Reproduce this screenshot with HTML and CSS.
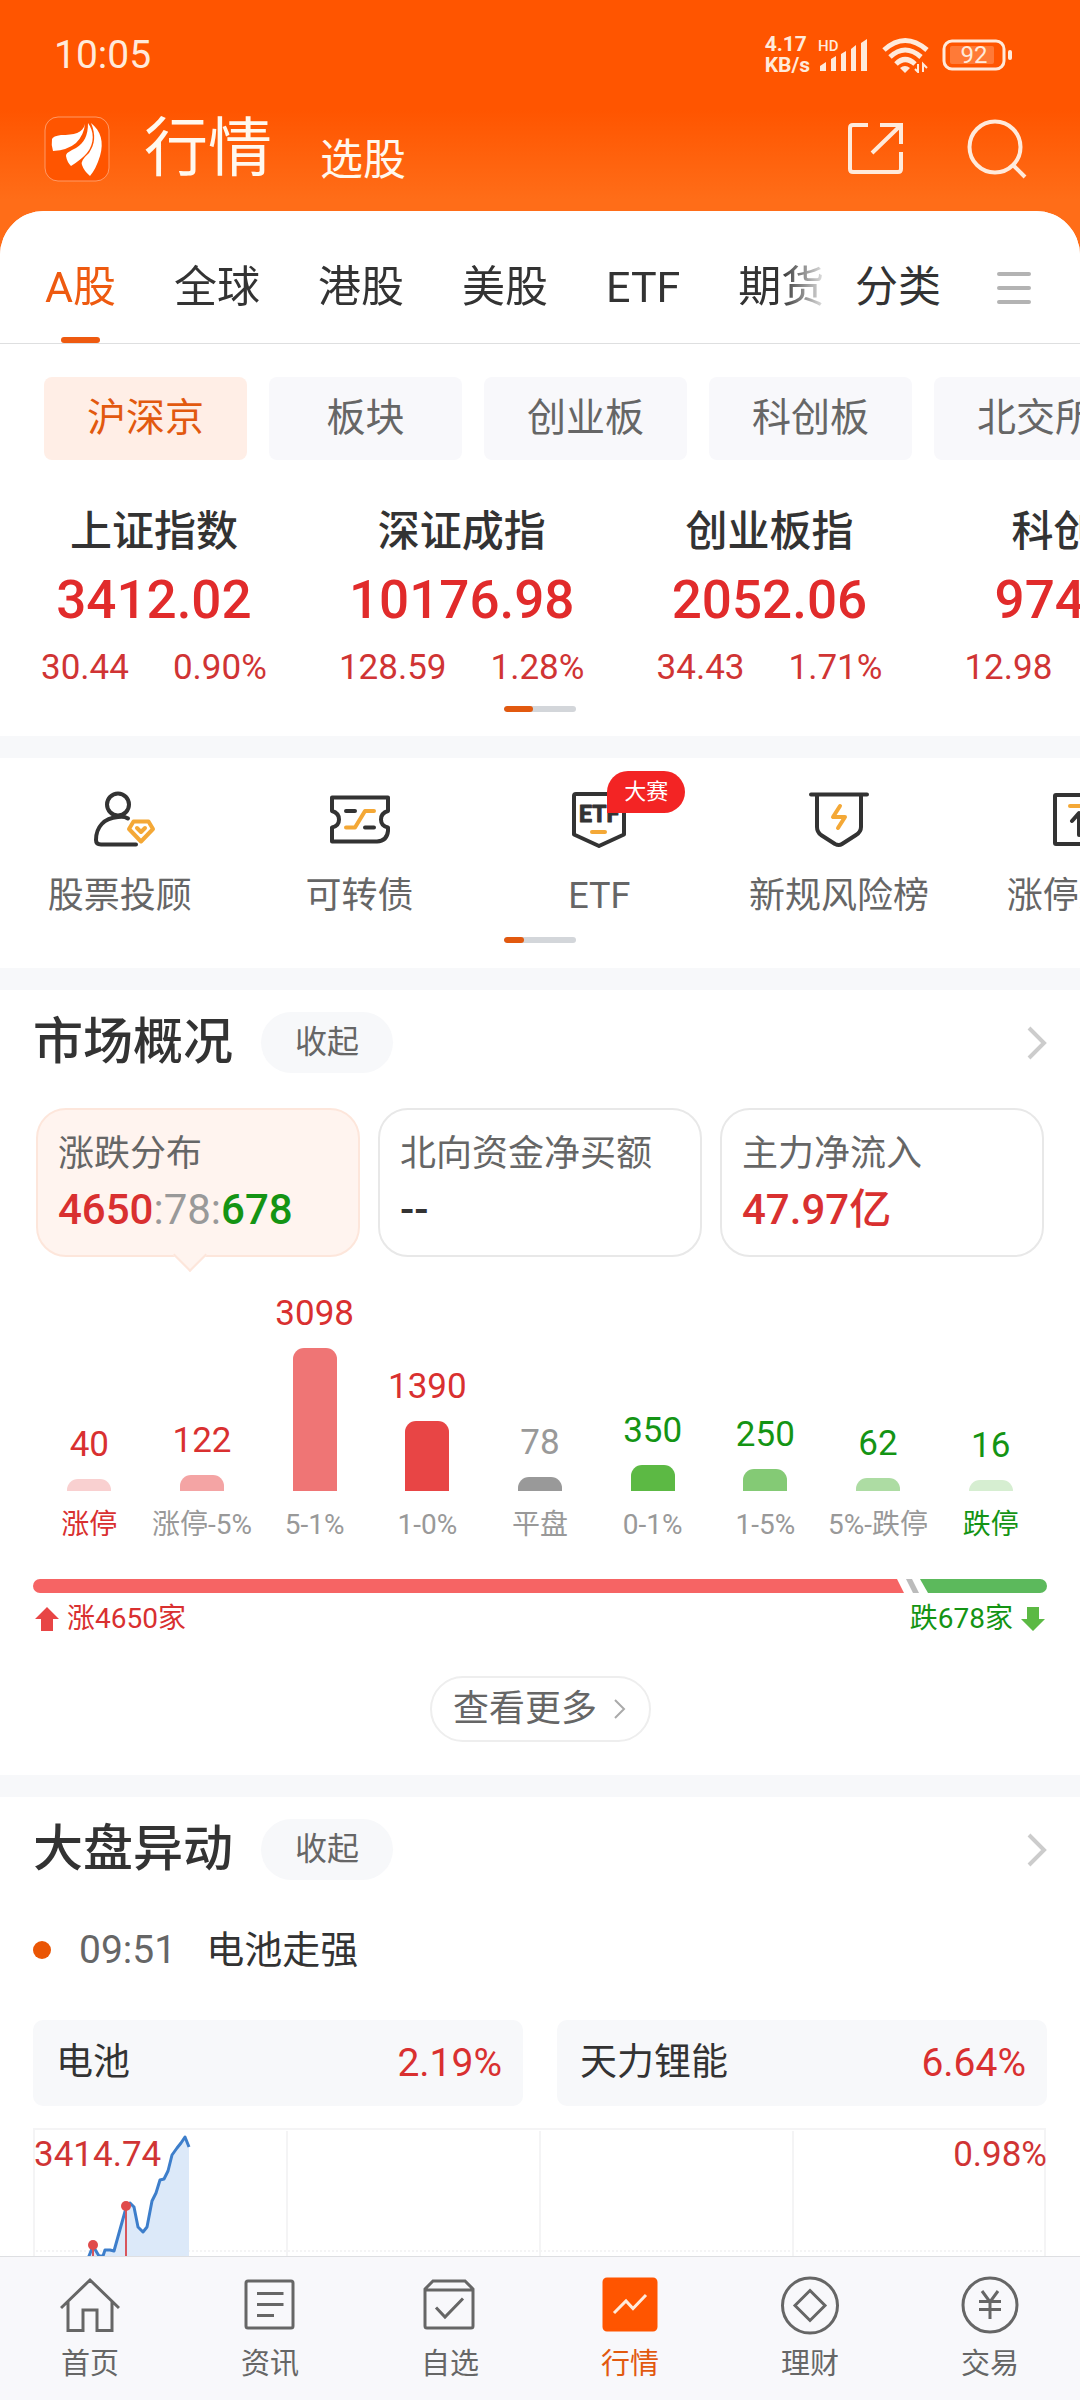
FILE: index.html
```
<!DOCTYPE html>
<html lang="zh-CN">
<head>
    <meta charset="UTF-8">
    <meta name="viewport" content="width=device-width, initial-scale=1.0">
    <title>行情</title>
    <link rel="stylesheet" href="styles.css">
</head>
<body>
    <div class="page">

        <!-- status bar -->
        <div class="status">
            <span class="clock">10:05</span>
            <div class="status_right">
                <span class="speed">4.17<br>KB/s</span>
                <svg class="signal" width="54" height="36" viewBox="0 0 54 36">
                    <text x="2" y="14" class="hd">HD</text>
                    <path d="M4 34v-5l6-4v9zM15 34V22l5-3v15zM25 34V17l5-3v20zM35 34V12l5-4v26zM45 34V6l6-4v32z"/>
                </svg>
                <svg class="wifi" width="48" height="36" viewBox="0 0 48 36">
                    <path d="M2 13Q23-6 45 13M8 20Q23 6 39 20M14 27Q23 18 33 27" fill="none" stroke-width="5"/>
                    <path d="M18 31q5-4 10 0l-5 5z"/>
                    <path d="M36 27v8l-3-3M41 35v-8l4 4" fill="none" stroke-width="2"/>
                </svg>
                <svg class="battery" width="71" height="32" viewBox="0 0 71 32">
                    <rect x="2" y="2" width="60" height="28" rx="8" fill="none" stroke-width="3"/>
                    <rect x="8" y="7" width="44" height="18" rx="2" opacity=".25"/>
                    <rect x="66" y="11" width="4" height="10" rx="2"/>
                    <text x="32" y="24" text-anchor="middle">92</text>
                </svg>
            </div>
        </div>

        <!-- title bar -->
        <header class="topbar">
            <a href="#" class="logo" aria-label="首页">
                <svg width="66" height="66" viewBox="0 0 66 66">
                    <rect x="1" y="1" width="64" height="64" rx="13" fill="#ff5500" stroke="#ff9a66"/>
                    <path d="M41 8C39 17 30 19 17 19Q9 20 8 23Q7 29 9 35Q24 34 32 27Q40 19 41 8Z"/>
                    <path d="M44 7C44 20 40 27 32 32Q21 37 22 40Q23 46 27 50Q38 43 43 37C51 27 50 15 44 7Z"/>
                    <path d="M47 7C52 19 51 28 45 37Q36 45 38 49Q40 55 46 60Q52 53 56 40C60 26 57 15 47 7Z"/>
                </svg>
            </a>
            <div class="titles">
                <h1>行情</h1>
                <a href="#">选股</a>
            </div>
            <button class="icon_btn" aria-label="分享">
                <svg width="56" height="56" viewBox="0 0 56 56">
                    <path d="M20 4H5Q2 4 2 7V48Q2 51 5 51H50Q53 51 53 48V31M32 4H53V23M53 4L24 32"/>
                </svg>
            </button>
            <button class="icon_btn" aria-label="搜索">
                <svg width="60" height="60" viewBox="0 0 60 60">
                    <circle cx="28" cy="28" r="25.500"/>
                    <path d="M46 46L58 58"/>
                </svg>
            </button>
        </header>

        <main class="sheet">
            <nav class="tabs">
                <div class="tab_list">
                    <button class="tab on">A股</button>
                    <button class="tab">全球</button>
                    <button class="tab">港股</button>
                    <button class="tab">美股</button>
                    <button class="tab">ETF</button>
                    <button class="tab">期货</button>
                </div>
                <button class="tab">分类</button>
                <button class="tab_menu" aria-label="菜单">
                    <svg width="34" height="34" viewBox="0 0 34 34"><path d="M2 3H32M2 17H32M2 31H32"/></svg>
                </button>
            </nav>

            <!-- index quotes -->
            <section class="block quotes">
                <div class="chips">
                    <button class="chip on">沪深京</button>
                    <button class="chip">板块</button>
                    <button class="chip">创业板</button>
                    <button class="chip">科创板</button>
                    <button class="chip">北交所</button>
                </div>
                <div class="index_list">
                    <div class="index"><h3>上证指数</h3><strong>3412.02</strong><p><span>30.44</span><span>0.90%</span></p></div>
                    <div class="index"><h3>深证成指</h3><strong>10176.98</strong><p><span>128.59</span><span>1.28%</span></p></div>
                    <div class="index"><h3>创业板指</h3><strong>2052.06</strong><p><span>34.43</span><span>1.71%</span></p></div>
                    <div class="index"><h3>科创50</h3><strong>974.65</strong><p><span>12.98</span><span>1.35%</span></p></div>
                </div>
                <div class="pager"><span style="width: 40%"></span></div>
            </section>

            <!-- tools -->
            <section class="block tools">
                <div class="tool_list">
                    <a href="#" class="tool">
                        <svg width="72" height="60" viewBox="0 0 72 60">
                            <circle cx="34" cy="14.500" r="11"/>
                            <path d="M44 28.500C41 26.500 37 26.500 34 27C20 28 12 37 12 50Q12 54.500 17 54.500H52"/>
                            <path class="gold" d="M49.500 31.500H64.500L69 39 57 51.500 45 39Z"/>
                            <path class="gold" d="M53 38L57 42L61 38"/>
                        </svg>
                        股票投顾
                    </a>
                    <a href="#" class="tool">
                        <svg width="72" height="60" viewBox="0 0 72 60">
                            <path d="M8 7.500H64V21Q57 23 57 29.500T64 37.500V41Q63 51 53 51.500H8V37.500Q15 36 15 29.500T8 21Z"/>
                            <path d="M22 21H31M41 37.500H50"/>
                            <path class="gold" d="M22 37.500H31L41 21H50"/>
                        </svg>
                        可转债
                    </a>
                    <a href="#" class="tool">
                        <span class="tool_icon">
                            <svg width="72" height="60" viewBox="0 0 72 60">
                                <path d="M11 6Q11 4 13 4H59Q61 4 61 6V44.500L36 56 11 44.500Z"/>
                                <text x="16" y="32">ETF</text>
                                <path class="gold" d="M29 42H42"/>
                            </svg>
                            <span class="badge">大赛</span>
                        </span>
                        ETF
                    </a>
                    <a href="#" class="tool">
                        <svg width="72" height="60" viewBox="0 0 72 60">
                            <path d="M8 4.500H64M14 5V37Q14 42 18 45L32 54Q36 56 39 54L53 45Q58 42 58 37V5"/>
                            <path class="gold" d="M37 16L30 27H42L35 38"/>
                        </svg>
                        新规风险榜
                    </a>
                    <a href="#" class="tool">
                        <svg width="72" height="60" viewBox="0 0 72 60">
                            <rect x="12" y="5" width="48" height="49" rx="1"/>
                            <path class="gold" d="M27 16H45"/>
                            <path d="M36 45V26M29 31L36 23L43 31"/>
                        </svg>
                        涨停聚焦
                    </a>
                </div>
                <div class="pager"><span style="width: 28%"></span></div>
            </section>

            <!-- market overview -->
            <section class="block market">
                <div class="head">
                    <h2>市场概况</h2>
                    <button class="fold">收起</button>
                    <a href="#" class="more_arrow" aria-label="更多"><svg width="20" height="34" viewBox="0 0 20 34"><path d="M2 2L17 17L2 32"/></svg></a>
                </div>
                <div class="cards">
                    <button class="card on">
                        <span class="card_name">涨跌分布</span>
                        <span class="card_num"><b class="red">4650</b><span class="gray">:78:</span><b class="green">678</b></span>
                    </button>
                    <button class="card">
                        <span class="card_name">北向资金净买额</span>
                        <span class="card_num"><b>--</b></span>
                    </button>
                    <button class="card">
                        <span class="card_name">主力净流入</span>
                        <span class="card_num"><b class="red">47.97亿</b></span>
                    </button>
                </div>
                <div class="bars">
                    <div class="col red"><b>40</b><i class="r1" style="height: 12px"></i><span>涨停</span></div>
                    <div class="col red"><b>122</b><i class="r2" style="height: 16px"></i><span class="gray">涨停-5%</span></div>
                    <div class="col red"><b>3098</b><i class="r3" style="height: 143px"></i><span class="gray">5-1%</span></div>
                    <div class="col red"><b>1390</b><i class="r4" style="height: 70px"></i><span class="gray">1-0%</span></div>
                    <div class="col gray"><b>78</b><i class="flat" style="height: 14px"></i><span>平盘</span></div>
                    <div class="col green"><b>350</b><i class="g4" style="height: 26px"></i><span class="gray">0-1%</span></div>
                    <div class="col green"><b>250</b><i class="g3" style="height: 22px"></i><span class="gray">1-5%</span></div>
                    <div class="col green"><b>62</b><i class="g2" style="height: 13px"></i><span class="gray">5%-跌停</span></div>
                    <div class="col green"><b>16</b><i class="g1" style="height: 11px"></i><span>跌停</span></div>
                </div>
                <div class="ratio">
                    <span class="ratio_up" style="flex-grow: 4650"></span>
                    <span class="ratio_cut"></span>
                    <span class="ratio_down" style="flex-grow: 678"></span>
                </div>
                <div class="ratio_text">
                    <span class="red"><svg width="24" height="24" viewBox="0 0 24 24"><path fill="#e84545" d="M12 0L24 12H18V24H6V12H0Z"/></svg>涨4650家</span>
                    <span class="green">跌678家<svg width="24" height="24" viewBox="0 0 24 24"><path fill="#5cb944" d="M12 24L0 12H6V0H18V12H24Z"/></svg></span>
                </div>
                <a href="#" class="see_more">查看更多<svg width="14" height="22" viewBox="0 0 14 22"><path d="M2 2L11 11L2 20"/></svg></a>
            </section>

            <!-- market moves -->
            <section class="block moves">
                <div class="head">
                    <h2>大盘异动</h2>
                    <button class="fold">收起</button>
                    <a href="#" class="more_arrow" aria-label="更多"><svg width="20" height="34" viewBox="0 0 20 34"><path d="M2 2L17 17L2 32"/></svg></a>
                </div>
                <div class="event"><i></i><time>09:51</time><span>电池走强</span></div>
                <div class="stocks">
                    <a href="#"><span>电池</span><b>2.19%</b></a>
                    <a href="#"><span>天力锂能</span><b>6.64%</b></a>
                </div>
                <div class="trend">
                    <svg viewBox="0 0 1014 300">
                        <path class="grid" d="M1 300V1H1012V300M254 3V300M507 3V300M760 3V300"/>
                        <path class="grid dots" d="M3 123H1011"/>
                        <path class="area" d="M50 145L56 128 60 118 66 128 70 128 72 122 77 122 81 123 93 80 97 75 101 79 105 99 110 104 114 99 119 73 123 65 127 52 131 51 135 43 139 27 144 20 148 15 152 9 156 19V300H50Z"/>
                        <path class="line" d="M50 145L56 128 60 118 66 128 70 128 72 122 77 122 81 123 93 80 97 75 101 79 105 99 110 104 114 99 119 73 123 65 127 52 131 51 135 43 139 27 144 20 148 15 152 9 156 19"/>
                        <path class="mark" d="M60 118V300M93 78V300"/>
                        <circle cx="60" cy="117" r="5"/>
                        <circle cx="93" cy="78" r="5"/>
                    </svg>
                    <div class="trend_text"><span>3414.74</span><span>0.98%</span></div>
                </div>
            </section>
        </main>

        <!-- bottom menu -->
        <nav class="menu">
            <a href="#">
                <svg width="60" height="60" viewBox="0 0 60 60"><path d="M1 32L30 4L59 32M8 26V54.500H23V34H37V54.500H52V26"/></svg>
                首页
            </a>
            <a href="#">
                <svg width="60" height="60" viewBox="0 0 60 60"><rect x="6" y="5" width="47" height="47" rx="2"/><path d="M17 17.500H43.500M17 28.500H43.500M17 39.500H34"/></svg>
                资讯
            </a>
            <a href="#">
                <svg width="60" height="60" viewBox="0 0 60 60"><path d="M5 13L13 5H45L53 13V50Q53 52 51 52H7Q5 52 5 50ZM5 14H53M16 31.500L25 41L43 22.500"/></svg>
                自选
            </a>
            <a href="#" class="on">
                <svg width="60" height="60" viewBox="0 0 60 60"><rect x="4" y="3" width="52" height="51" rx="3" fill="#ff5500" stroke="#ff5500"/><path d="M14 37L26 25L33 32.500L46 19" stroke="#ffeadb"/></svg>
                行情
            </a>
            <a href="#">
                <svg width="60" height="60" viewBox="0 0 60 60"><circle cx="30" cy="29.500" r="27.500"/><path d="M30 14.500L45 29.500L30 44.500L15 29.500Z"/></svg>
                理财
            </a>
            <a href="#">
                <svg width="60" height="60" viewBox="0 0 60 60"><circle cx="30" cy="29" r="27"/><path d="M22 15L30 26L38 15M30 26V43M19 25.500H41M19 33.500H41"/></svg>
                交易
            </a>
        </nav>
    </div>
</body>
</html>
```
FILE: styles.css
```
* {
    box-sizing: border-box;
    margin: 0;
    padding: 0;
}

body {
    font-family: Roboto, "Noto Sans CJK SC", sans-serif;
    color: #333;
}

a {
    color: inherit;
    text-decoration: none;
}

button {
    font: inherit;
    color: inherit;
    background: none;
    border: 0;
    cursor: pointer;
}

svg {
    display: block;
    flex: none;
}

h1, h2, h3, b, strong {
    font-weight: 500;
}

.page {
    height: 100vh;
    display: flex;
    flex-direction: column;
    background: linear-gradient(#ff5500 110px, #ff6d18 200px);
}

/* status bar */
.status {
    flex: none;
    display: flex;
    justify-content: space-between;
    align-items: center;
    height: 110px;
    padding: 0 67px 0 54px;
    color: #ffeadb;
}

.clock {
    font-size: 39px;
}

.status_right {
    display: flex;
    align-items: center;
}

.status_right svg {
    fill: #ffeadb;
    stroke: none;
}

.speed {
    font-size: 21px;
    line-height: 21px;
    font-weight: 700;
    margin-right: 6px;
}

.hd {
    font-size: 15px;
    font-weight: 500;
}

.wifi, .battery {
    margin-left: 12px;
}

.wifi path, .battery rect {
    stroke: #ffeadb;
    stroke-width: 0;
}

.wifi path[stroke-width="5"] {
    stroke-width: 5px;
}

.wifi path[stroke-width="2"] {
    stroke-width: 2px;
}

.battery rect[stroke-width] {
    stroke-width: 3px;
}

.battery text {
    font-size: 24px;
}

/* title bar */
.topbar {
    flex: none;
    display: flex;
    align-items: center;
    padding: 6px 53px 29px 44px;
    color: #fff8ee;
}

.logo path {
    fill: #fff;
}

.titles {
    flex: 1;
    display: flex;
    align-items: flex-end;
    gap: 48px;
    margin-left: 34px;
    font-size: 43px;
    line-height: 44px;
}

.titles h1 {
    font-size: 64px;
    line-height: 66px;
    font-weight: 400;
}

.icon_btn {
    margin-left: 63px;
}

.icon_btn svg {
    fill: none;
    stroke: #ffeadb;
    stroke-width: 4px;
}

/* white sheet */
.sheet {
    flex: 1;
    min-height: 0;
    overflow: hidden;
    background: #f7f8fa;
    border-radius: 44px 44px 0 0;
}

.tabs {
    display: flex;
    align-items: flex-start;
    background: #fff;
    padding: 43px 49px 0 45px;
    border-bottom: 1px solid #dedfe0;
}

.tab_list {
    flex: 1;
    min-width: 0;
    display: flex;
    gap: 58px;
    overflow: hidden;
    margin-right: 24px;
    -webkit-mask-image: linear-gradient(to left, transparent, #000 50px);
    mask-image: linear-gradient(to left, transparent, #000 50px);
}

.tab {
    flex: none;
    font-size: 43px;
    line-height: 66px;
    padding-bottom: 23px;
    white-space: nowrap;
}

.tab.on {
    color: #ee5a10;
    padding-bottom: 0;
}

.tab.on::after {
    content: "";
    display: block;
    width: 39px;
    height: 6px;
    margin: 17px auto 0;
    border-radius: 3px;
    background: #ee5a10;
}

.tab_menu {
    margin: 17px 0 0 56px;
}

.tab_menu path {
    stroke: #b3b3b3;
    stroke-width: 4px;
    stroke-linecap: round;
}

.block {
    background: #fff;
    margin-bottom: 22px;
    overflow: hidden;
}

.chips {
    display: flex;
    gap: 22px;
    padding: 33px 0 0 44px;
}

.chip {
    flex: none;
    min-width: 193px;
    padding: 0 43px;
    font-size: 39px;
    line-height: 83px;
    color: #666;
    background: #f8f8fb;
    border-radius: 8px;
}

.chip.on {
    color: #e2590f;
    background: #ffeee6;
}

.index_list {
    display: grid;
    grid-auto-flow: column;
    grid-auto-columns: 28.5%;
    margin: 47px 0 16px;
}

.index {
    text-align: center;
    color: #e12b2b;
}

.index h3 {
    font-size: 42px;
    line-height: 50px;
    color: #333;
}

.index strong {
    display: block;
    font-size: 53px;
    line-height: 60px;
    margin: 13px 0 16px;
}

.index p {
    display: flex;
    justify-content: center;
    gap: 44px;
    font-size: 35px;
    line-height: 44px;
    color: #d03434;
}

.pager {
    width: 72px;
    height: 6px;
    margin: 0 auto;
    border-radius: 3px;
    background: #d3d6da;
    overflow: hidden;
}

.pager span {
    display: block;
    height: 6px;
    border-radius: 3px;
    background: #e2590f;
}

.quotes {
    padding-bottom: 24px;
}

/* tools */
.tools {
    padding: 32px 0 25px;
}

.tool_list {
    display: grid;
    grid-auto-flow: column;
    grid-auto-columns: 22.2%;
    margin-bottom: 19px;
}

.tool {
    display: flex;
    flex-direction: column;
    align-items: center;
    gap: 24px;
    font-size: 36px;
    line-height: 44px;
    color: #666;
    white-space: nowrap;
}

.tool svg {
    fill: none;
    stroke: #333;
    stroke-width: 4px;
    stroke-linecap: round;
    stroke-linejoin: round;
}

.tool svg .gold {
    stroke: #f4a836;
}

.tool svg text {
    font-size: 23px;
    font-weight: 700;
    fill: #333;
    stroke-width: 1px;
}

.tool_icon {
    position: relative;
}

.badge {
    position: absolute;
    left: 44px;
    top: -19px;
    width: 78px;
    font-size: 22px;
    line-height: 42px;
    text-align: center;
    color: #fff;
    background: #f32424;
    border-radius: 21px 21px 21px 0;
}

/* sections with a heading */
.market, .moves {
    padding: 22px 33px 0;
}

.head {
    display: flex;
    align-items: center;
}

.head h2 {
    font-size: 50px;
    line-height: 61px;
}

.fold {
    width: 132px;
    margin-left: 28px;
    font-size: 32px;
    line-height: 61px;
    color: #666;
    background: #f7f8fa;
    border-radius: 31px;
}

.more_arrow {
    margin-left: auto;
}

.more_arrow path, .see_more path {
    fill: none;
    stroke: #ccc;
    stroke-width: 4px;
}

.cards {
    display: grid;
    grid-template-columns: repeat(3, 1fr);
    gap: 18px;
    margin: 35px 3px 37px;
}

.card {
    position: relative;
    padding: 16px 20px 17px;
    text-align: left;
    line-height: 56px;
    border: 2px solid #e8e8e8;
    border-radius: 30px;
}

.card.on {
    background: #fff4ef;
    border-color: #fde6db;
}

.card.on::after {
    content: "";
    position: absolute;
    left: calc(50% - 20px);
    bottom: -12px;
    width: 22px;
    height: 22px;
    background: #fff4ef;
    border: solid #fde6db;
    border-width: 0 2px 2px 0;
    transform: rotate(45deg);
}

.card_name {
    display: block;
    font-size: 36px;
    color: #666;
}

.card_num {
    display: block;
    font-size: 42px;
}

.red {
    color: #d93030;
}

.green {
    color: #149414;
}

.gray {
    color: #999;
}

.bars {
    display: grid;
    grid-template-columns: repeat(9, 1fr);
    align-items: end;
}

.col {
    display: flex;
    flex-direction: column;
    align-items: center;
}

.col b {
    font-size: 35px;
    line-height: 40px;
    font-weight: 400;
}

.col i {
    width: 44px;
    margin: 14px 0 16px;
    border-radius: 11px 11px 0 0;
}

.col span {
    font-size: 28px;
    line-height: 36px;
    white-space: nowrap;
}

.r1 { background: #f9d0d0; }
.r2 { background: #f4a4a4; }
.r3 { background: #ef7575; }
.r4 { background: #e84545; }
.flat { background: #999; }
.g4 { background: #5cb944; }
.g3 { background: #84ca75; }
.g2 { background: #addca3; }
.g1 { background: #d6eed1; }

.ratio {
    display: flex;
    height: 14px;
    margin: 36px 0 8px;
    border-radius: 7px;
    overflow: hidden;
}

.ratio_up {
    background: #f66464;
    clip-path: polygon(0 0, calc(100% - 7px) 0, 100% 100%, 0 100%);
}

.ratio_cut {
    width: 14px;
    margin: 0 1px;
    background: #bbb;
    clip-path: polygon(1px 0, 7px 0, 100% 100%, 8px 100%);
}

.ratio_down {
    background: #5cb95c;
    clip-path: polygon(0 0, 100% 0, 100% 100%, 8px 100%);
}

.ratio_text {
    display: flex;
    justify-content: space-between;
    font-size: 28px;
    line-height: 36px;
    padding: 0 2px;
}

.ratio_text span {
    display: flex;
    align-items: center;
    gap: 8px;
}

.see_more {
    display: flex;
    justify-content: center;
    align-items: center;
    gap: 16px;
    width: 221px;
    margin: 39px auto 33px;
    font-size: 36px;
    line-height: 62px;
    color: #666;
    border: 2px solid #eee;
    border-radius: 33px;
}

.see_more path {
    stroke: #aaa;
    stroke-width: 2px;
}

/* market moves */
.event {
    display: flex;
    align-items: center;
    margin: 45px 0;
    font-size: 38px;
    line-height: 50px;
}

.event i {
    width: 18px;
    height: 18px;
    border-radius: 50%;
    background: #ea5504;
}

.event time {
    margin: 0 30px 0 28px;
    font-size: 39px;
    color: #666;
}

.stocks {
    display: grid;
    grid-template-columns: 1fr 1fr;
    gap: 34px;
    margin-bottom: 22px;
}

.stocks a {
    display: flex;
    justify-content: space-between;
    padding: 0 21px 0 23px;
    font-size: 37px;
    line-height: 86px;
    background: #f7f8fa;
    border-radius: 10px;
}

.stocks b {
    font-size: 39px;
    font-weight: 400;
    color: #d93030;
}

.trend {
    display: grid;
}

.trend svg, .trend_text {
    grid-area: 1 / 1;
}

.trend svg {
    width: 100%;
}

.trend_text {
    display: flex;
    justify-content: space-between;
    padding: 7px 0 0 1px;
    font-size: 35px;
    line-height: 40px;
    color: #d03434;
}

.grid {
    fill: none;
    stroke: #f4f4f5;
    stroke-width: 2px;
}

.dots {
    stroke-dasharray: 2 2;
}

.area {
    fill: #dce9f9;
}

.line {
    fill: none;
    stroke: #3d7ecb;
    stroke-width: 3px;
    stroke-linejoin: round;
}

.mark {
    stroke: #d8555c;
    stroke-width: 2px;
}

.trend circle {
    fill: #e04b4b;
}

/* bottom menu */
.menu {
    flex: none;
    display: grid;
    grid-template-columns: repeat(6, 1fr);
    padding: 19px 0 18px;
    background: #f8f8fb;
    border-top: 1px solid #dedfe2;
}

.menu a {
    display: flex;
    flex-direction: column;
    align-items: center;
    gap: 10px;
    font-size: 29px;
    line-height: 36px;
    color: #666;
}

.menu svg {
    fill: none;
    stroke: #666;
    stroke-width: 3px;
}

.menu .on {
    color: #e2590f;
}
```
